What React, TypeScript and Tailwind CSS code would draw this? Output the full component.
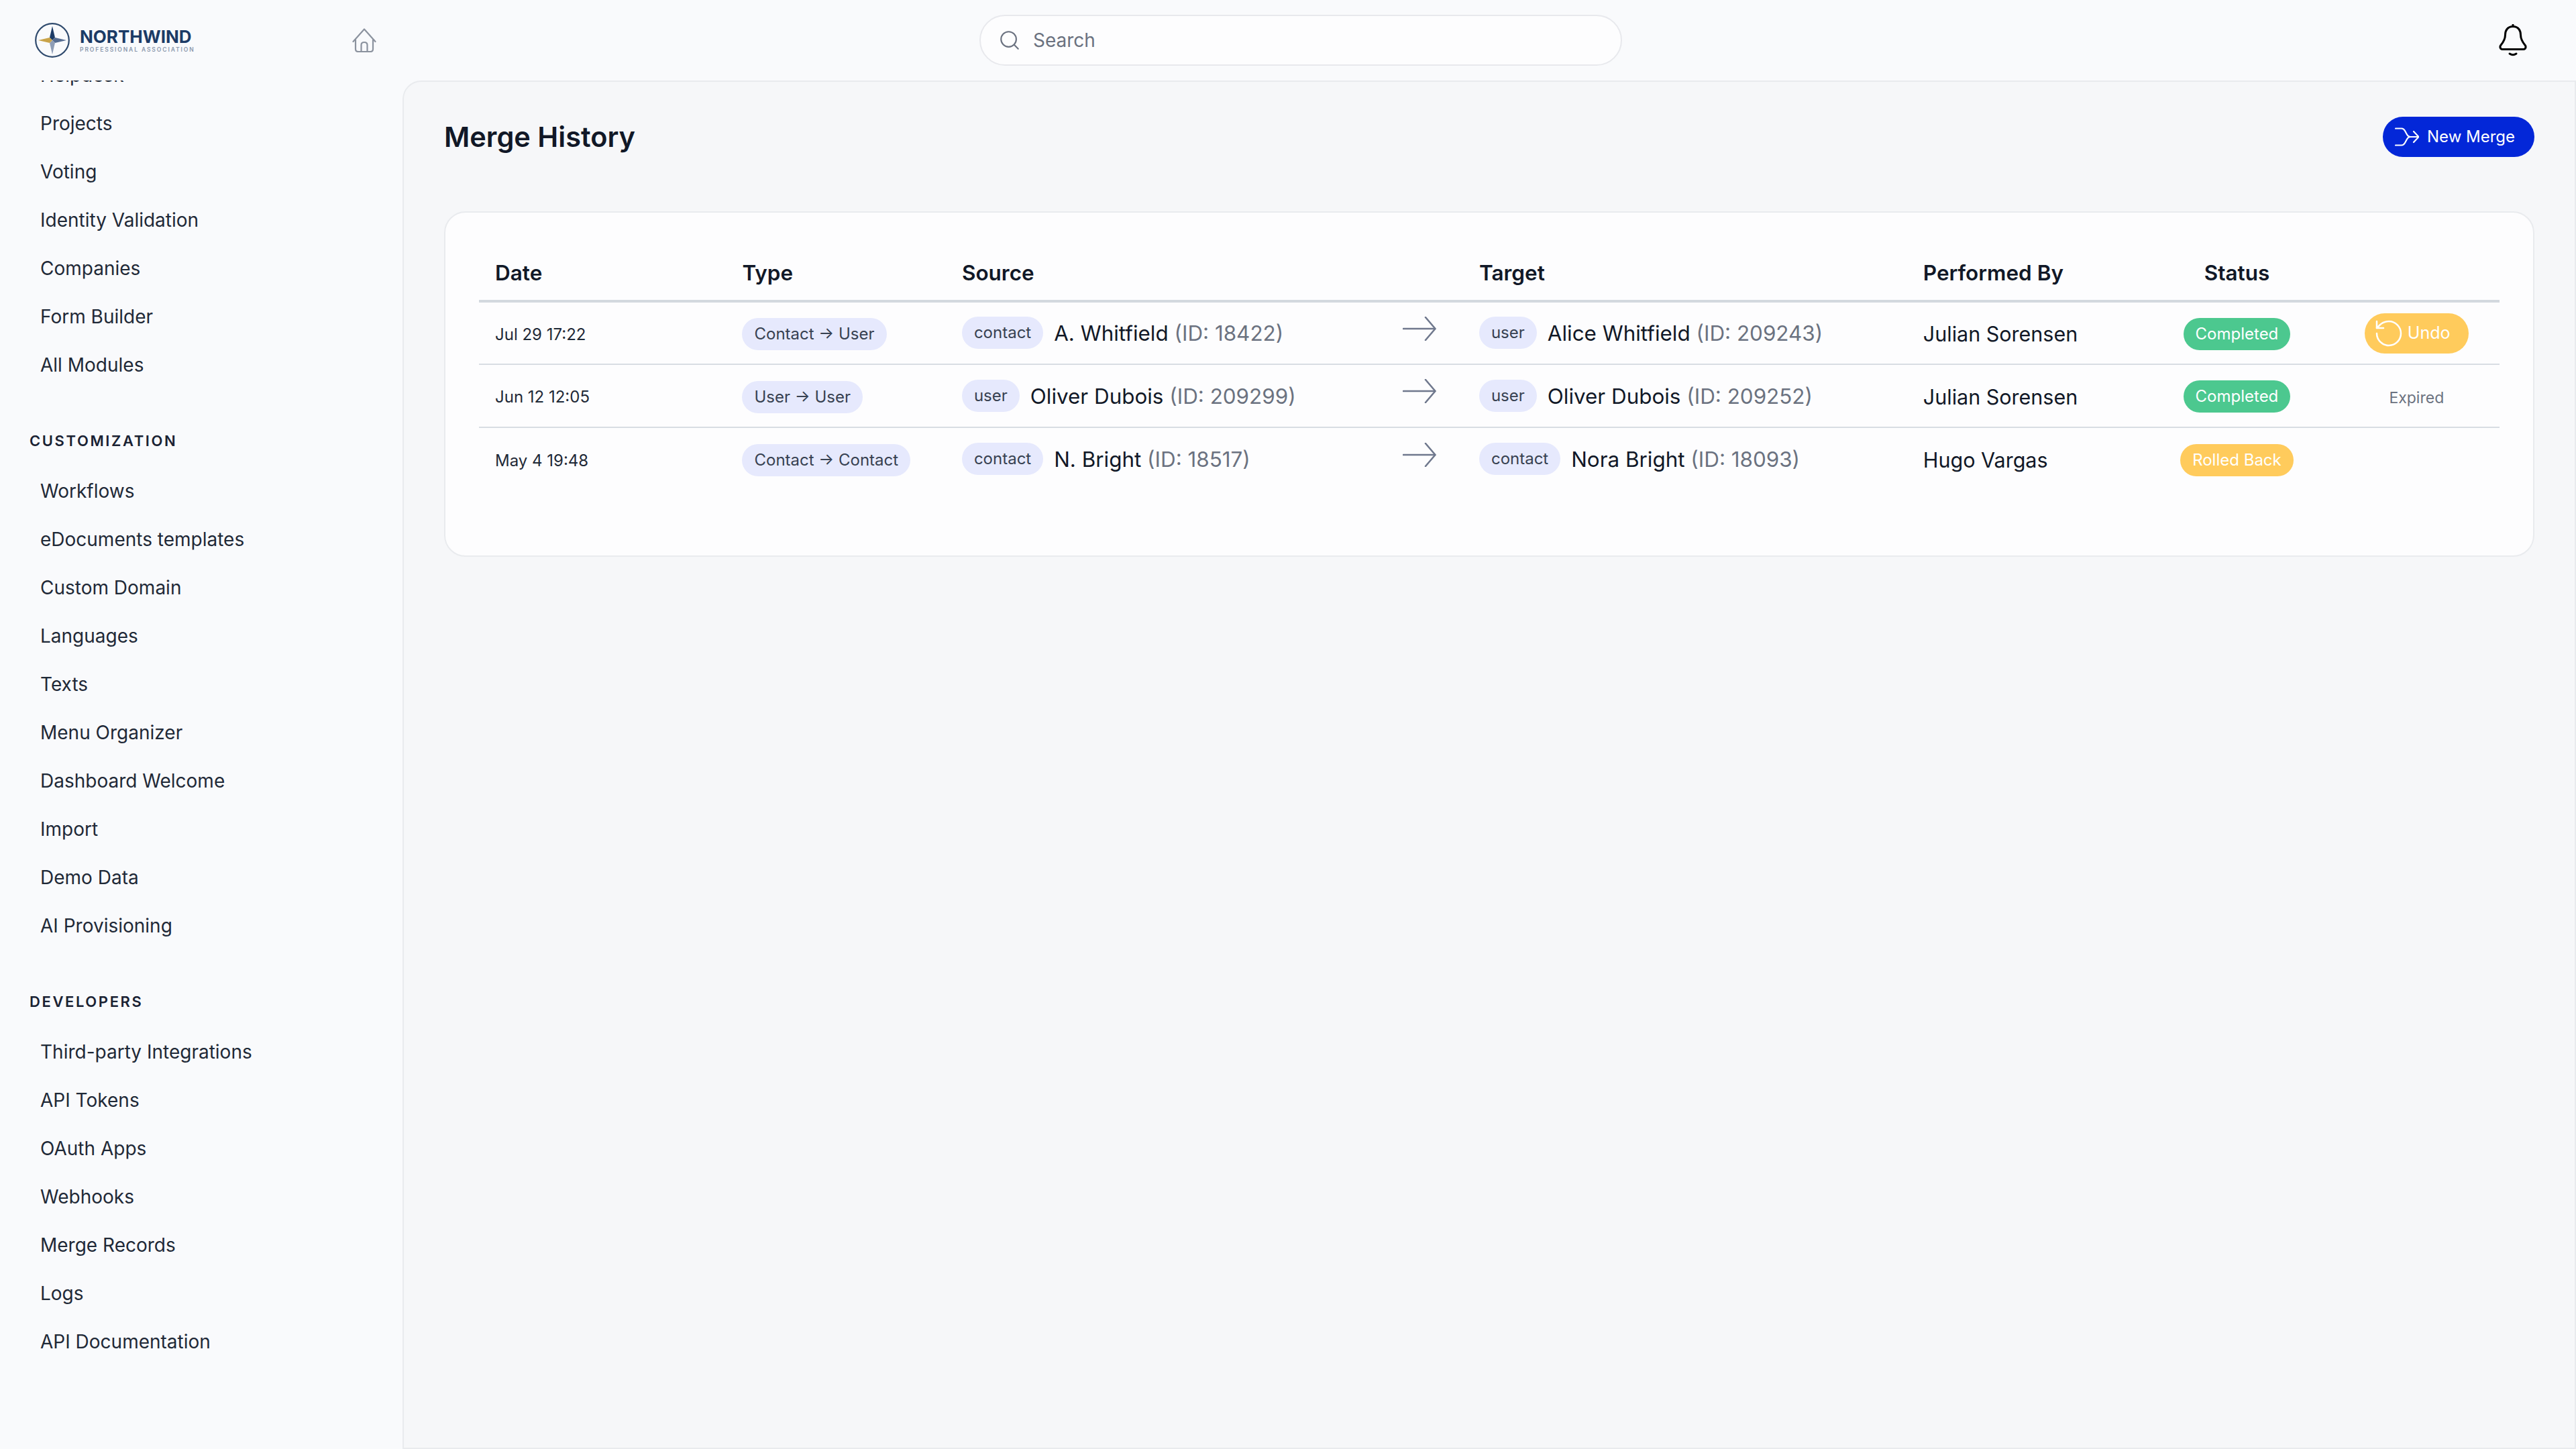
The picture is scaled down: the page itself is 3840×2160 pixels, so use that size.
import { RotateCcw, Search } from 'lucide-react';

const topItems = ['Helpdesk', 'Projects', 'Voting', 'Identity Validation', 'Companies', 'Form Builder', 'All Modules'];
const customization = [
  'Workflows',
  'eDocuments templates',
  'Custom Domain',
  'Languages',
  'Texts',
  'Menu Organizer',
  'Dashboard Welcome',
  'Import',
  'Demo Data',
  'AI Provisioning',
];
const developers = ['Third-party Integrations', 'API Tokens', 'OAuth Apps', 'Webhooks', 'Merge Records', 'Logs', 'API Documentation'];

interface MergeRow {
  date: string;
  type: string;
  sourceKind: string;
  sourceName: string;
  sourceId: string;
  targetKind: string;
  targetName: string;
  targetId: string;
  by: string;
  status: 'Completed' | 'Rolled Back';
  action: 'undo' | 'expired' | null;
}

const rows: MergeRow[] = [
  {
    date: 'Jul 29 17:22',
    type: 'Contact → User',
    sourceKind: 'contact',
    sourceName: 'A. Whitfield',
    sourceId: '(ID: 18422)',
    targetKind: 'user',
    targetName: 'Alice Whitfield',
    targetId: '(ID: 209243)',
    by: 'Julian Sorensen',
    status: 'Completed',
    action: 'undo',
  },
  {
    date: 'Jun 12 12:05',
    type: 'User → User',
    sourceKind: 'user',
    sourceName: 'Oliver Dubois',
    sourceId: '(ID: 209299)',
    targetKind: 'user',
    targetName: 'Oliver Dubois',
    targetId: '(ID: 209252)',
    by: 'Julian Sorensen',
    status: 'Completed',
    action: 'expired',
  },
  {
    date: 'May 4 19:48',
    type: 'Contact → Contact',
    sourceKind: 'contact',
    sourceName: 'N. Bright',
    sourceId: '(ID: 18517)',
    targetKind: 'contact',
    targetName: 'Nora Bright',
    targetId: '(ID: 18093)',
    by: 'Hugo Vargas',
    status: 'Rolled Back',
    action: null,
  },
];

function Logo() {
  return (
    <div className="flex items-center gap-[15px]">
      <svg width="52" height="52" viewBox="0 0 52 52" fill="none">
        <circle cx="26" cy="26" r="24.8" stroke="#2f4a6d" strokeWidth="2.2" />
        <polygon points="26,5 30,22 26,26 22,22" fill="#1c3b66" />
        <polygon points="47,26 30,22 26,26 30,30" fill="#566d92" />
        <polygon points="26,47 30,30 26,26 22,30" fill="#8e9db6" />
        <polygon points="5,26 22,22 26,26 22,30" fill="#c9a349" />
      </svg>
      <div className="flex flex-col">
        <span className="text-[26px] leading-[27px] font-bold text-[#1c3b66]">NORTHWIND</span>
        <span className="text-[8.5px] leading-[12px] font-semibold tracking-[1.9px] text-[#8b99ad] whitespace-nowrap">
          PROFESSIONAL ASSOCIATION
        </span>
      </div>
    </div>
  );
}

function HomeIcon() {
  return (
    <svg width="36" height="36" viewBox="0 0 36 36" fill="none" stroke="#8b929e" strokeWidth="2.2" strokeLinecap="round" strokeLinejoin="round">
      <path d="M1.5 20 L18 1.5 L34.5 20" />
      <path d="M5 17 V31 Q5 35 9 35 H27 Q31 35 31 31 V17" />
      <path d="M13.5 35 V25 Q13.5 21 18 21 Q22.5 21 22.5 25 V35" />
    </svg>
  );
}

function BellIcon() {
  return (
    <svg width="42" height="48" viewBox="0 0 42 48" fill="none" stroke="#000000" strokeWidth="3" strokeLinecap="round" strokeLinejoin="round">
      <path d="M21 1 V3.5" />
      <path d="M21 3.5 C12.5 3.5 9.5 10 9.5 16 C9.5 22.5 7 26.5 2.8 31.5 C1 33.8 2.2 37.5 5 37.5 H37 C39.8 37.5 41 33.8 39.2 31.5 C35 26.5 32.5 22.5 32.5 16 C32.5 10 29.5 3.5 21 3.5 Z" />
      <path d="M16 44 Q21 47.5 26 44" />
    </svg>
  );
}

function MergeIcon() {
  return (
    <svg width="36" height="28" viewBox="0 0 36 28" fill="none" stroke="#ffffff" strokeWidth="2.2" strokeLinecap="round" strokeLinejoin="round">
      <path d="M1 1.5 H10 Q13 1.5 15 5 L18 10.5 Q20 14 23 14 H35" />
      <path d="M1 26.5 H10 Q13 26.5 15 23 L18 17.5 Q20 14 23 14" />
      <path d="M28 6 L35.5 14 L28 22" />
    </svg>
  );
}

function FlowArrow() {
  return (
    <svg width="50" height="36" viewBox="0 0 50 36" fill="none" stroke="#6f788d" strokeWidth="2.6" strokeLinecap="round" strokeLinejoin="round">
      <path d="M1 18 H48" />
      <path d="M34 1 L48.5 18 L34 35" />
    </svg>
  );
}

function NavItem({ label }: { label: string }) {
  return (
    <div className="flex h-[72px] items-center pl-[60px] text-[28px] text-[#1f2937] whitespace-nowrap">
      {label}
    </div>
  );
}

function NavHeading({ label }: { label: string }) {
  return (
    <div className="mt-[57px] mb-[19px] flex h-[40px] items-center pl-[44px] text-[22px] font-semibold tracking-[2.6px] text-[#1a2233]">
      {label}
    </div>
  );
}

function Pill({ children, className }: { children: React.ReactNode; className: string }) {
  return (
    <span className={`inline-flex h-[48px] items-center rounded-full text-[24px] whitespace-nowrap ${className}`}>
      {children}
    </span>
  );
}

function Party({ kind, name, id }: { kind: string; name: string; id: string }) {
  return (
    <div className="flex items-center gap-[16px]">
      <Pill className="-mt-[3px] bg-[#e6e9fd] px-[18px] text-[#374151]">{kind}</Pill>
      <span className="text-[31.4px] whitespace-nowrap text-[#111827]">
        {name} <span className="text-[#6b7280]">{id}</span>
      </span>
    </div>
  );
}

export default function App() {
  return (
    <div className="flex h-screen w-screen flex-col overflow-hidden bg-[#f9fafc] font-['Inter',sans-serif]">
      <header className="relative z-10 flex h-[120px] shrink-0 items-center bg-[#f9fafc]">
        <div className="flex w-[600px] shrink-0 items-center pl-[52px]">
          <Logo />
          <div className="ml-[234px]">
            <HomeIcon />
          </div>
        </div>
        <div className="ml-[860px] flex h-[76px] w-[958px] items-center gap-[18px] rounded-full border-2 border-[#e8e9ed] bg-[#fdfdfe] pl-[26px]">
          <Search size={34} strokeWidth={1.5} className="text-[#6b7280]" />
          <span className="text-[28px] text-[#6b7280]">Search</span>
        </div>
        <div className="ml-auto pr-[73px]">
          <BellIcon />
        </div>
      </header>

      <div className="flex min-h-0 flex-1">
        <aside className="-mt-[7px] w-[600px] shrink-0 overflow-hidden">
          <nav className="-mt-[37px]">
            {topItems.map((item) => (
              <NavItem key={item} label={item} />
            ))}
            <NavHeading label="CUSTOMIZATION" />
            {customization.map((item) => (
              <NavItem key={item} label={item} />
            ))}
            <NavHeading label="DEVELOPERS" />
            {developers.map((item) => (
              <NavItem key={item} label={item} />
            ))}
          </nav>
        </aside>

        <main className="min-w-0 flex-1 rounded-tl-[28px] border-2 border-[#e9ebee] bg-[#f6f7f9] px-[60px] pt-[52px]">
          <div className="flex h-[60px] items-center justify-between">
            <h1 className="text-[41.5px] font-semibold text-[#111827]">Merge History</h1>
            <button className="flex h-[60px] w-[226px] items-center gap-[12px] rounded-full bg-[#0327d8] pl-[18px] text-[24px] text-white">
              <MergeIcon />
              New Merge
            </button>
          </div>

          <div className="mt-[81px] h-[515px] rounded-[32px] border-2 border-[#e9ebee] bg-[#fdfdfe] px-[50px] py-[48px]">
            <table className="w-full table-fixed">
              <colgroup>
                <col className="w-[368px]" />
                <col className="w-[327px]" />
                <col className="w-[640px]" />
                <col className="w-[130px]" />
                <col className="w-[661px]" />
                <col className="w-[347px]" />
                <col className="w-[288px]" />
                <col className="w-[247px]" />
              </colgroup>
              <thead>
                <tr className="h-[84px] border-b-4 border-[#d3d9df] text-left text-[31.5px] font-semibold text-[#111827]">
                  <th className="px-[24px] pt-[2px] font-semibold">Date</th>
                  <th className="px-[24px] pt-[2px] font-semibold">Type</th>
                  <th className="px-[24px] pt-[2px] font-semibold">Source</th>
                  <th />
                  <th className="px-[24px] pt-[2px] font-semibold">Target</th>
                  <th className="px-[24px] pt-[2px] font-semibold">Performed By</th>
                  <th className="px-[24px] pt-[2px] text-center font-semibold">Status</th>
                  <th />
                </tr>
              </thead>
              <tbody>
                {rows.map((row) => (
                  <tr key={row.date} className="h-[94px] border-b-2 border-[#d8dde3] last:border-b-0">
                    <td className="px-[24px] pt-[4px] text-[24px] text-[#1f2937]">{row.date}</td>
                    <td className="px-[24px] pt-[3px]">
                      <Pill className="bg-[#e6e9fd] px-[18px] text-[#374151]">{row.type}</Pill>
                    </td>
                    <td className="px-[24px] pt-[3px]">
                      <Party kind={row.sourceKind} name={row.sourceName} id={row.sourceId} />
                    </td>
                    <td>
                      <div className="-mt-[14px] flex justify-center">
                        <FlowArrow />
                      </div>
                    </td>
                    <td className="px-[24px] pt-[3px]">
                      <Party kind={row.targetKind} name={row.targetName} id={row.targetId} />
                    </td>
                    <td className="px-[24px] pt-[3px] text-[30.5px] whitespace-nowrap text-[#111827]">{row.by}</td>
                    <td className="pt-[2px] text-center">
                      <Pill className={`px-[18px] text-white ${row.status === 'Completed' ? 'bg-[#4cc88f]' : 'bg-[#ffcb5c]'}`}>
                        {row.status}
                      </Pill>
                    </td>
                    <td className="text-center">
                      {row.action === 'undo' && (
                        <button className="inline-flex h-[60px] w-[155px] items-center gap-[4px] rounded-full bg-[#ffcb5c] pl-[12px] text-[25px] text-white">
                          <RotateCcw size={48} strokeWidth={1.25} />
                          Undo
                        </button>
                      )}
                      {row.action === 'expired' && <span className="inline-block pt-[6px] text-[23px] text-[#6b7280]">Expired</span>}
                    </td>
                  </tr>
                ))}
              </tbody>
            </table>
          </div>
        </main>
      </div>
    </div>
  );
}
